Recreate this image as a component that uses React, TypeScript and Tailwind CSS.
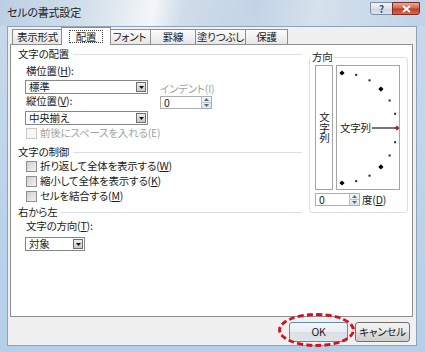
import React from "react";

type Cls = { className?: string };

function GroupHeader({ text, className = "" }: { text: string } & Cls) {
  return (
    <div className={`flex h-[12px] items-center ${className}`}>
      <span className="whitespace-nowrap leading-[12px]">{text}</span>
      <div className="ml-[4px] h-px flex-1 bg-[#d5dfe5]" />
    </div>
  );
}

function Combo({ value, className = "" }: { value: string } & Cls) {
  return (
    <div className={`flex h-[14px] border border-[#828790] bg-white ${className}`}>
      <span className="flex-1 whitespace-nowrap pl-[3px] leading-[12px]">{value}</span>
      <div className="m-px flex w-[10px] items-center justify-center border border-[#6f6f6f] bg-[linear-gradient(#ededed,#c9c9c9)]">
        <svg width="5" height="3" viewBox="0 0 5 3">
          <path d="M0 0H5L2.5 3Z" fill="#111" />
        </svg>
      </div>
    </div>
  );
}

function Spin({ className = "" }: Cls) {
  return (
    <div className={`flex h-[13px] border border-[#abadb3] bg-white ${className}`}>
      <span className="flex-1 pl-[3px] leading-[11px]">0</span>
      <div className="flex w-[10px] flex-col border-l border-[#b5c2cf] bg-[linear-gradient(#f3f6f9,#dbe4ec)]">
        <div className="flex flex-1 items-center justify-center border-b border-[#b5c2cf]">
          <svg width="5" height="3" viewBox="0 0 5 3">
            <path d="M0 3H5L2.5 0Z" fill="#5b6b7c" />
          </svg>
        </div>
        <div className="flex flex-1 items-center justify-center">
          <svg width="5" height="3" viewBox="0 0 5 3">
            <path d="M0 0H5L2.5 3Z" fill="#5b6b7c" />
          </svg>
        </div>
      </div>
    </div>
  );
}

function Check({ label, disabled = false, className = "" }: { label: React.ReactNode; disabled?: boolean } & Cls) {
  return (
    <div className={`flex h-[12px] items-center ${className}`}>
      <div
        className={
          disabled
            ? "h-[11px] w-[11px] border border-[#c9c9c9] bg-[#f6f6f6]"
            : "h-[11px] w-[11px] border border-[#8e8f8f] bg-[linear-gradient(135deg,#cfcfcf,#f3f3f3)]"
        }
      />
      <span className={`ml-[3px] whitespace-nowrap leading-[12px] ${disabled ? "text-[#a3a3a3]" : ""}`}>{label}</span>
    </div>
  );
}

function Tab({ text, w, selected = false }: { text: string; w: string; selected?: boolean }) {
  if (selected) {
    return (
      <div className={`relative z-10 -mx-[2px] -mb-px flex h-[18px] items-center justify-center border border-b-0 border-[#8e8f8f] bg-white ${w}`}>
        <span className="border border-dotted border-[#444] px-[6px] leading-[11px]">{text}</span>
      </div>
    );
  }
  return (
    <div className={`-ml-px flex h-[15px] items-center justify-center border border-b-0 border-[#8e8f8f] bg-[linear-gradient(#fbfbfb,#e6e6e6)] first:ml-0 ${w}`}>
      <span className="whitespace-nowrap leading-[12px]">{text}</span>
    </div>
  );
}

function ArcDots() {
  const cx = 5;
  const cy = 62;
  const r = 55;
  const items = [];
  for (let i = 0; i <= 12; i++) {
    const deg = 90 - i * 15;
    const a = (deg * Math.PI) / 180;
    const x = cx + r * Math.cos(a);
    const y = cy - r * Math.sin(a);
    if (deg % 45 === 0) {
      const s = 2.6;
      items.push(
        <polygon
          key={i}
          points={`${x},${y - s} ${x + s},${y} ${x},${y + s} ${x - s},${y}`}
          fill={deg === 0 ? "#a0282c" : "#000"}
        />
      );
    } else {
      items.push(<rect key={i} x={x - 1} y={y - 1} width="2" height="2" fill="#222" />);
    }
  }
  return (
    <svg width="62" height="123" viewBox="0 0 62 123" className="absolute left-0 top-0">
      <line x1="35" y1="62" x2="58" y2="62" stroke="#555" strokeWidth="1.6" />
      {items}
    </svg>
  );
}

export default function App() {
  return (
    <div className="flex h-[352px] w-[425px] flex-col overflow-hidden bg-[linear-gradient(#c8d9ea,#b3cfea)] font-['Noto_Sans_CJK_JP',sans-serif] text-[10.5px] tracking-[-0.2px] text-[#1b1b1b] [font-feature-settings:'palt']">
      {/* title bar */}
      <div className="flex h-[26px] items-start justify-between bg-[linear-gradient(100deg,#bccfe2_0%,#d2dfeb_20%,#e8eef4_31%,#f3f6f9_36%,#cfdce9_43%,#c3d4e6_60%,#d5e1ec_74%,#bfd3e7_100%)] pl-[7px] pr-[5px]">
        <span className="mt-[6px] text-[11px] leading-[13px] text-[#1e1e1e]">セルの書式設定</span>
        <div className="mt-[2px] flex">
          <div className="flex h-[13px] w-[23px] items-center justify-center rounded-bl-[3px] border border-[#7b8ea5] bg-[linear-gradient(#f2f5f8,#d9e2eb_50%,#c7d4e1_51%,#dbe5ef)]">
            <span className="text-[10px] font-bold leading-[10px] text-[#4a5566]">?</span>
          </div>
          <div className="-ml-px flex h-[13px] w-[28px] items-center justify-center rounded-br-[3px] border border-[#7a2e25] bg-[linear-gradient(#eaa898,#d0654e_48%,#bf3b24_52%,#d56a4c)]">
            <svg width="9" height="8" viewBox="0 0 9 8">
              <path d="M1 1L8 7M8 1L1 7" stroke="#fff" strokeWidth="1.8" />
            </svg>
          </div>
        </div>
      </div>

      {/* client area */}
      <div className="ml-[7px] flex h-[320px] w-[410px] flex-col border border-[#8ea3ba] bg-[#f0f0f0]">
        {/* tabs */}
        <div className="ml-[4px] mt-px flex h-[16px] items-end">
          <Tab text="表示形式" w="w-[51px]" />
          <Tab text="配置" w="w-[50px]" selected />
          <Tab text="フォント" w="w-[43px]" />
          <Tab text="罫線" w="w-[46px]" />
          <Tab text="塗りつぶし" w="w-[51px]" />
          <Tab text="保護" w="w-[43px]" />
        </div>

        {/* panel */}
        <div className="ml-[2px] flex h-[273px] w-[403px] border border-[#8e8f8f] bg-white">
          {/* left column */}
          <div className="flex w-[291px] flex-col pl-[7px]">
            <GroupHeader text="文字の配置" className="mt-[3px]" />
            <div className="flex items-start">
              <div className="ml-[7px] flex flex-col">
                <span className="mt-[5px] h-[12px] pl-px leading-[12px]">
                  横位置(<u>H</u>):
                </span>
                <Combo value="標準" className="mt-[3px] w-[123px]" />
                <span className="mt-px h-[12px] pl-px leading-[12px]">
                  縦位置(<u>V</u>):
                </span>
                <Combo value="中央揃え" className="mt-[4px] w-[123px]" />
              </div>
              <div className="ml-[12px] flex flex-col">
                <span className="mt-[23px] h-[12px] whitespace-nowrap leading-[12px] text-[#a3a3a3]">インデント(I)</span>
                <Spin className="mt-px w-[52px]" />
              </div>
            </div>
            <Check disabled label="前後にスペースを入れる(E)" className="ml-[8px] mt-[2px]" />

            <GroupHeader text="文字の制御" className="mt-[7px]" />
            <Check
              label={
                <>
                  折り返して全体を表示する(<u>W</u>)
                </>
              }
              className="ml-[8px] mt-[2px]"
            />
            <Check
              label={
                <>
                  縮小して全体を表示する(<u>K</u>)
                </>
              }
              className="ml-[8px] mt-[3px]"
            />
            <Check
              label={
                <>
                  セルを結合する(<u>M</u>)
                </>
              }
              className="ml-[8px] mt-[3px]"
            />

            <GroupHeader text="右から左" className="mt-[4px]" />
            <span className="ml-[8px] mt-[2px] h-[12px] leading-[12px]">
              文字の方向(<u>T</u>):
            </span>
            <Combo value="対象" className="ml-[7px] mt-[5px] w-[60px]" />
          </div>

          {/* right column */}
          <fieldset className="ml-[7px] mt-[6px] w-[99px] self-start rounded-[3px] border border-[#d5dfe5] pb-[6px]">
            <legend className="ml-px px-px leading-[12px]">方向</legend>
            <div className="ml-[5px] mt-[2px] flex">
              <div className="flex h-[125px] w-[18px] items-center justify-center border border-[#a5a5a5]">
                <span className="leading-[12px] [writing-mode:vertical-rl]">文字列</span>
              </div>
              <div className="relative ml-[3px] h-[125px] w-[64px] border border-[#a5a5a5]">
                <ArcDots />
                <span className="absolute left-[3px] top-[56px] leading-[12px]">文字列</span>
              </div>
            </div>
            <div className="ml-[5px] mt-[3px] flex items-center">
              <Spin className="w-[45px]" />
              <span className="ml-[2px] leading-[12px]">
                度(<u>D</u>)
              </span>
            </div>
          </fieldset>
        </div>

        {/* buttons */}
        <div className="mt-[5px] flex justify-end gap-[7px] pr-[6px]">
          <div className="relative">
            <div className="flex h-[20px] w-[59px] items-center justify-center rounded-[3px] border border-[#5d8fb5] bg-[linear-gradient(#f4f6f8,#e9edf0_50%,#d9dfe4_51%,#dde4ea)]">
              <span className="leading-[12px]">OK</span>
            </div>
            <div className="absolute -left-[11px] -top-[9px] h-[34px] w-[77px] rounded-[50%] border-[3px] border-dashed border-[#d4121e]" />
          </div>
          <div className="flex h-[20px] w-[55px] items-center justify-center rounded-[3px] border border-[#707070] bg-[linear-gradient(#f2f2f2,#ebebeb_50%,#dddddd_51%,#cfcfcf)]">
            <span className="leading-[12px]">キャンセル</span>
          </div>
        </div>
      </div>
    </div>
  );
}
